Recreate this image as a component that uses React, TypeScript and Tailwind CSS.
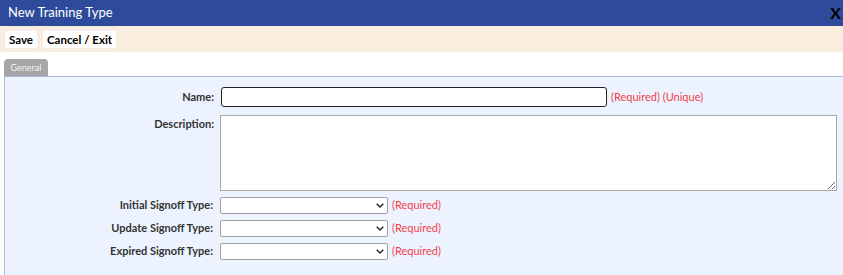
import React from "react";

const font = { fontFamily: 'Lato, "Open Sans", sans-serif' };

function Req({ children }: { children: React.ReactNode }) {
  return <span className="ml-[4px] text-[11px] text-[#f2404a]">{children}</span>;
}

function SelectRow({ label }: { label: string }) {
  return (
    <div className="flex h-[23px] items-center">
      <label className="w-[208px] text-right text-[11px] font-bold text-[#333]">{label}</label>
      <div className="relative ml-[7px] h-[17px] w-[168px]">
        <select className="block h-[17px] w-full appearance-none rounded-[2px] border border-[#a0a0a0] bg-white text-[11px]">
          <option></option>
        </select>
        <svg className="pointer-events-none absolute right-[4px] top-[6px]" width="8" height="5" viewBox="0 0 8 5">
          <path d="M0.7 0.7 L4 4 L7.3 0.7" fill="none" stroke="#222" strokeWidth="1.4" />
        </svg>
      </div>
      <Req>(Required)</Req>
    </div>
  );
}

export default function App() {
  return (
    <div className="h-[275px] w-[843px] overflow-hidden bg-white" style={font}>
      <div className="flex h-[26px] items-center justify-between bg-[#2e4b9b] pl-[8px] pr-[2px]">
        <span className="text-[13px] text-white">New Training Type</span>
        <span className="text-[16px] font-bold text-black">X</span>
      </div>
      <div className="flex h-[26px] items-center gap-[4px] bg-[#f9eedd] px-[4px]">
        <button className="h-[19px] rounded-[3px] border border-[#eee] bg-white px-[4px] text-[11.5px] font-bold text-black">Save</button>
        <button className="h-[19px] rounded-[3px] border border-[#eee] bg-white px-[4px] text-[11.5px] font-bold text-black">Cancel / Exit</button>
      </div>
      <div className="h-[7px]" />
      <div className="ml-[4px] flex h-[17px] w-[44px] items-center justify-center rounded-t-[4px] bg-[#a6a6a6] text-[9px] text-[#f4f4f4]">
        General
      </div>
      <div className="ml-[4px] h-[199px] border-l border-t border-[#a9bbdc] bg-[#edf3fe]">
        <div className="mt-[10px] flex h-[20px] items-center">
          <label className="w-[209px] text-right text-[11px] font-bold text-[#333]">Name:</label>
          <input className="ml-[7px] h-[20px] w-[386px] rounded-[3px] border-[1.5px] border-[#222] bg-white outline-none" />
          <Req>(Required) (Unique)</Req>
        </div>
        <div className="mt-[8px] flex">
          <label className="w-[209px] pt-[1px] text-right text-[11px] font-bold text-[#333]">Description:</label>
          <textarea className="ml-[6px] h-[76px] w-[617px] border border-[#aaa] bg-white" />
        </div>
        <div className="mt-[3px] flex flex-col">
          <SelectRow label="Initial Signoff Type:" />
          <SelectRow label="Update Signoff Type:" />
          <SelectRow label="Expired Signoff Type:" />
        </div>
      </div>
    </div>
  );
}
